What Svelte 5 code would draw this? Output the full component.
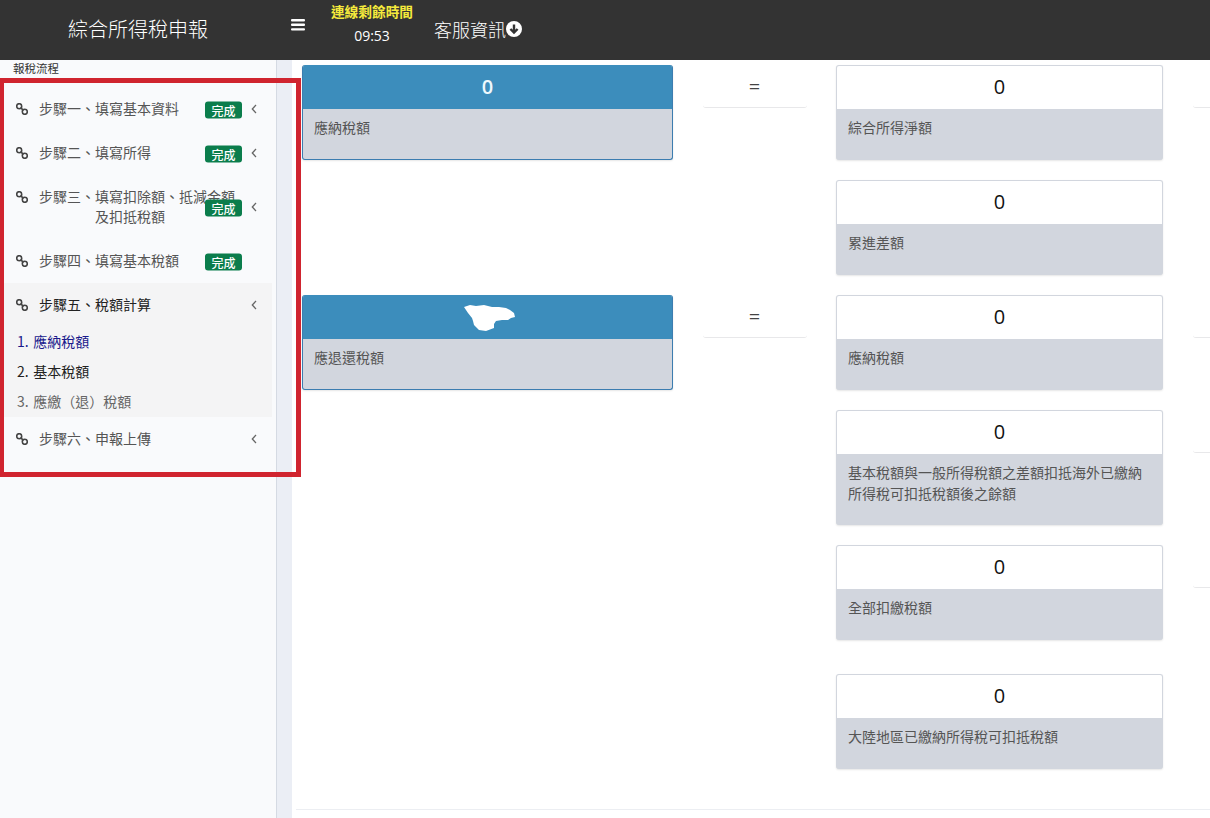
<script>
	const steps = [
		{ lead: '步驟一、', rest: '填寫基本資料', done: true, arrow: true },
		{ lead: '步驟二、', rest: '填寫所得', done: true, arrow: true },
		{ lead: '步驟三、', rest: '填寫扣除額、抵減金額及扣抵稅額', done: true, arrow: true },
		{ lead: '步驟四、', rest: '填寫基本稅額', done: true, arrow: false },
		{
			lead: '步驟五、',
			rest: '稅額計算',
			arrow: true,
			active: true,
			subs: [
				{ no: '1.', text: '應納稅額', cls: 'current' },
				{ no: '2.', text: '基本稅額', cls: 'next' },
				{ no: '3.', text: '應繳（退）稅額', cls: 'later' }
			]
		},
		{ lead: '步驟六、', rest: '申報上傳', arrow: true }
	];

	const rows = [
		{ main: { value: '0', label: '應納稅額' }, op: true, value: '0', label: '綜合所得淨額', side: true },
		{ value: '0', label: '累進差額' },
		{ main: { masked: true, label: '應退還稅額' }, op: true, value: '0', label: '應納稅額', side: true },
		{ value: '0', label: '基本稅額與一般所得稅額之差額扣抵海外已繳納所得稅可扣抵稅額後之餘額', side: true, tall: true },
		{ value: '0', label: '全部扣繳稅額', side: true, last: true },
		{ value: '0', label: '大陸地區已繳納所得稅可扣抵稅額' }
	];
</script>

<div class="page" lang="zh-TW">
	<header class="top">
		<div class="brand">綜合所得稅申報</div>
		<svg class="burger" viewBox="0 0 14 12" width="14" height="12" aria-hidden="true">
			<rect y="0" width="14" height="2.4" rx="1" />
			<rect y="4.6" width="14" height="2.4" rx="1" />
			<rect y="9.2" width="14" height="2.4" rx="1" />
		</svg>
		<div class="timer">
			<span class="timer-label">連線剩餘時間</span>
			<span class="timer-value">09:53</span>
		</div>
		<div class="service">
			<span>客服資訊</span>
			<svg viewBox="0 0 16 16" width="16" height="16" aria-hidden="true">
				<circle cx="8" cy="8" r="8" fill="#fff" />
				<path d="M8 3.4v8M4.4 8 8 11.6 11.6 8" fill="none" stroke="#333" stroke-width="2.4" />
			</svg>
		</div>
	</header>

	<div class="body">
		<aside class="sidebar">
			<div class="side-title">報稅流程</div>
			<ul class="steps">
				{#each steps as step}
					<li class:active={step.active}>
						<div class="step">
							<svg class="link" viewBox="0 0 12 12" width="12" height="12" aria-hidden="true">
								<g fill="none" stroke="#444" stroke-width="1.6">
									<circle cx="3.2" cy="3.2" r="2.5" />
									<circle cx="8.8" cy="8.8" r="2.5" />
									<path d="M4.6 4.6l2.8 2.8" />
								</g>
							</svg>
							<span class="step-text">{step.lead}{step.rest}</span>
							{#if step.done}
								<span class="badge">完成</span>
							{/if}
							{#if step.arrow}
								<svg class="chevron" viewBox="0 0 6 10" width="6" height="10" aria-hidden="true">
									<path d="M5 1 1.3 5 5 9" fill="none" stroke="#666" stroke-width="1.3" />
								</svg>
							{/if}
						</div>
						{#if step.subs}
							<ol class="subs">
								{#each step.subs as sub}
									<li class={sub.cls}>{sub.no} {sub.text}</li>
								{/each}
							</ol>
						{/if}
					</li>
				{/each}
			</ul>
		</aside>
		<div class="strip"></div>

		<main class="content">
			{#each rows as row}
				<div class="row" class:last={row.last}>
					{#if row.main}
						<section class="card primary">
							<div class="value">
								{#if row.main.masked}
									<svg class="blot" viewBox="0 0 51 27" width="51" height="27" aria-hidden="true">
										<path d="M0 3 6 1l6 1 8-1 8 2 7 0 7 1 4 2 4 3 1 4-4 1-3 2-6 0-6 1-2 3 0 4-8 3-7-1-5-5-1-4-1-3-4-5z" fill="#fff" />
									</svg>
								{:else}
									{row.main.value}
								{/if}
							</div>
							<div class="label">{row.main.label}</div>
						</section>
					{:else}
						<div></div>
					{/if}

					{#if row.op}
						<div class="op">=</div>
					{:else}
						<div></div>
					{/if}

					<section class="card" class:tall={row.tall}>
						<div class="value">{row.value}</div>
						<div class="label">{row.label}</div>
					</section>

					{#if row.side}
						<div class="op side"></div>
					{/if}
				</div>
			{/each}
			<div class="rule"></div>
		</main>
	</div>

	<!-- red annotation box drawn over the sidebar -->
	<div class="mark"></div>
</div>

<style>
	:global(body) {
		margin: 0;
		background: #fff;
	}

	.page {
		position: relative;
		width: 1210px;
		height: 818px;
		overflow: hidden;
		font-family: "Noto Sans CJK TC", "Open Sans", sans-serif;
		font-size: 14px;
		line-height: 21px;
		color: #333;
	}

	.top {
		display: flex;
		align-items: center;
		height: 60px;
		background: #333;
		color: #fff;
	}

	.brand {
		width: 291px;
		padding-left: 68px;
		box-sizing: border-box;
		font-size: 20px;
		font-weight: 300;
		line-height: 28px;
		margin-top: -2px;
	}

	.burger {
		fill: #fff;
		margin-top: -10px;
	}

	.timer {
		display: flex;
		flex-direction: column;
		align-items: center;
		width: 84px;
		margin-left: 25px;
		margin-top: -12px;
	}

	.timer-label {
		color: #f5ea3c;
		font-weight: 700;
		font-size: 13.7px;
		line-height: 21px;
	}

	.timer-value {
		font-family: "Open Sans", sans-serif;
		font-size: 14px;
		line-height: 24px;
		margin-top: 2px;
	}

	.service {
		display: flex;
		align-items: center;
		margin-left: 20px;
		font-size: 18px;
		font-weight: 300;
		line-height: 26px;
		margin-top: -2px;
	}

	.body {
		display: flex;
		height: 758px;
	}

	.sidebar {
		width: 276px;
		flex: none;
		background: #f9fafc;
		border-right: 1px solid #d5dae3;
	}

	.strip {
		width: 15px;
		flex: none;
		background: #ebeef5;
	}

	.side-title {
		height: 27px;
		padding-left: 13px;
		font-size: 11.5px;
		line-height: 17px;
	}

	.steps {
		list-style: none;
		margin: 0;
		padding: 0;
	}

	.steps > li.active {
		background: #f4f4f5;
		margin-right: 4px;
	}

	.step {
		position: relative;
		padding: 11px 40px 13px 39px;
		color: #555;
	}

	.active .step {
		color: #222;
	}

	.step-text {
		display: block;
		line-height: 20px;
		padding-left: 56px;
		text-indent: -56px;
	}

	.link {
		position: absolute;
		left: 16px;
		top: 16px;
	}

	.badge {
		position: absolute;
		left: 205px;
		top: 50%;
		transform: translateY(-50%);
		margin-top: 1px;
		width: 37px;
		height: 17px;
		border-radius: 3px;
		background: #0b7d4c;
		color: #fff;
		font-size: 12px;
		font-weight: 500;
		line-height: 17px;
		text-align: center;
	}

	.chevron {
		position: absolute;
		left: 251px;
		top: 50%;
		margin-top: -5px;
	}

	.subs {
		list-style: none;
		margin: 0;
		padding: 0 0 0 17px;
		word-spacing: 1.5px;
	}

	.subs li {
		height: 30px;
		line-height: 29px;
	}

	.subs .current {
		color: #1a1a8c;
	}

	.subs .next {
		color: #222;
	}

	.subs .later {
		color: #666;
	}

	.content {
		flex: 1;
		min-width: 0;
		padding: 5px 0 0 10px;
	}

	.row {
		display: grid;
		grid-template-columns: 371px 104px 327px 104px;
		column-gap: 29.5px;
		align-items: start;
		margin-bottom: 20px;
	}

	.row.last {
		margin-bottom: 34px;
	}

	.card {
		height: 95px;
		box-sizing: border-box;
		display: flex;
		flex-direction: column;
		border-radius: 3px;
		border: 1px solid #d2d6de;
		border-bottom: 0;
		box-shadow: 0 1px 2px rgba(0, 0, 0, 0.1);
		overflow: hidden;
		background: #d2d6de;
	}

	.card.tall {
		height: 115px;
	}

	.value {
		flex: none;
		height: 43px;
		box-sizing: border-box;
		padding-bottom: 2px;
		display: flex;
		align-items: center;
		justify-content: center;
		background: #fff;
		color: #111;
		font-family: "Open Sans", sans-serif;
		font-size: 20px;
	}

	.label {
		flex: 1;
		padding: 8px 11px 0;
		color: #555;
	}

	.primary {
		border: 1px solid #3c7db0;
		border-top: 0;
	}

	.primary .value {
		height: 44px;
		background: #3c8dbc;
		color: #eef8fc;
		font-weight: 600;
	}

	.primary .blot {
		margin: 2px 0 0 3px;
	}

	.op {
		height: 43px;
		box-sizing: border-box;
		border-bottom: 1px solid #e8e8ea;
		border-radius: 0 0 3px 3px;
		display: flex;
		align-items: center;
		justify-content: center;
		font-family: "Open Sans", sans-serif;
		font-size: 20px;
		color: #444;
	}

	.rule {
		height: 1px;
		margin: 40px 0 0 -6px;
		background: #eceef2;
	}

	/* hand-drawn mark on the screenshot, sits over the sidebar */
	.mark {
		position: absolute;
		left: -1px;
		top: 78px;
		width: 302px;
		height: 399px;
		box-sizing: border-box;
		border: 5px solid #d0242f;
		pointer-events: none;
	}
</style>
